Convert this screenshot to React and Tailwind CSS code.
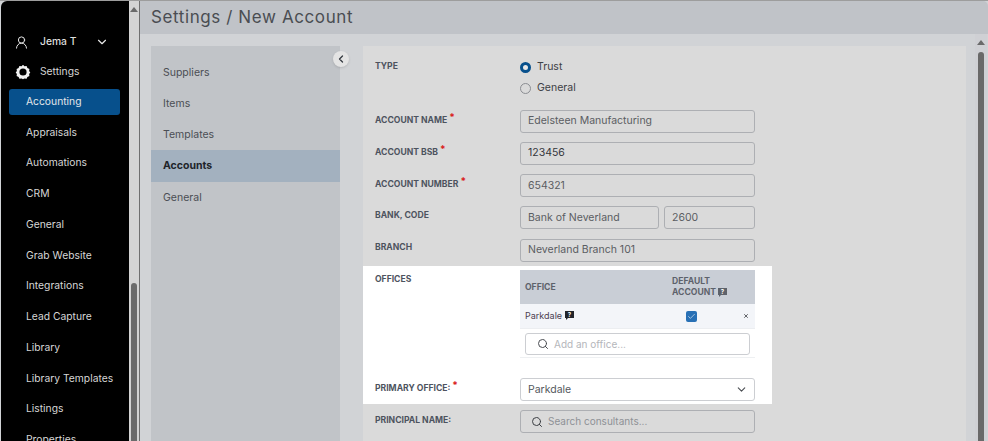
import { ChevronDown, ChevronLeft, Search, UserRound, Check, X } from 'lucide-react';

const navItems = ['Appraisals', 'Automations', 'CRM', 'General', 'Grab Website', 'Integrations', 'Lead Capture', 'Library', 'Library Templates', 'Listings', 'Properties'];
const subItems = ['Suppliers', 'Items', 'Templates', 'Accounts', 'General'];

function ScrollArrow() {
  return <div className="w-0 h-0 border-x-[4px] border-x-transparent border-b-[5px] border-b-[#6a6a6a]" />;
}

function GearIcon() {
  return (
    <svg width="16" height="16" viewBox="0 0 16 16" className="shrink-0">
      <path d="M8 .8l1.4 1.5 2.2-.3.8 2 2 .9-.3 2.2L15.3 8.4l-1.2 1.5.3 2.1-2 .9-.8 1.9-2.2-.2L8 15.2l-1.4-.6-2.2.2-.8-1.9-2-.9.3-2.1L.7 8.4l1.2-1.3-.3-2.2 2-.9.8-2 2.2.3z" fill="#f2f2f2" />
      <circle cx="8" cy="8" r="3.6" fill="#000" />
    </svg>
  );
}

function HelpTag() {
  return (
    <svg width="9" height="9" viewBox="0 0 9 9" className="inline-block shrink-0">
      <path d="M0 0h9v7H3L1 9V7H0z" fill="currentColor" />
      <text x="4.5" y="5.8" textAnchor="middle" fontSize="6" fontWeight="700" fill="#fff">?</text>
    </svg>
  );
}

function Label({ children, required, className = '' }) {
  return (
    <div className={`w-[145px] shrink-0 text-[8.6px] font-bold text-[#4d535e] leading-[12px] ${className}`}>
      {children}
      {required && <span className="text-[#d92020] text-[10px] leading-[0] ml-[2px] relative -top-[2px]">*</span>}
    </div>
  );
}

function Field({ value, className = '', dark }) {
  return (
    <div className={`h-[23px] border border-[#adafb3] rounded-[3px] flex items-center pl-[7px] text-[10.5px] ${dark ? 'text-[#33363b]' : 'text-[#5a5d62]'} ${className}`}>
      {value}
    </div>
  );
}

function FormRow({ label, required, labelClass = 'pt-[4px]', children }) {
  return (
    <div className="flex items-start">
      <Label required={required} className={labelClass}>{label}</Label>
      <div className="w-[235px] flex gap-[5px]">{children}</div>
    </div>
  );
}

export default function App() {
  return (
    <div className="w-[988px] h-[441px] overflow-hidden flex flex-col bg-[#d1d3d6] border-t border-[#9d9d9d] font-['Inter','Liberation_Sans',sans-serif]">
      <div className="flex flex-1 min-h-0">
        {/* left nav */}
        <div className="w-[128px] shrink-0 bg-black rounded-tl-[6px] ml-[1px] pt-[32px] overflow-hidden text-[#d6d6d6] text-[10.3px]">
          <div className="flex items-center h-[18px] pl-[13px] pr-[20px] text-[#dedede] font-medium">
            <UserRound size={15} strokeWidth={1.6} className="text-[#e6e6e6]" />
            <span className="ml-[11px] flex-1">Jema T</span>
            <ChevronDown size={14} strokeWidth={2} className="text-[#e6e6e6]" />
          </div>
          <div className="flex items-center h-[18px] mt-[12px] pl-[14px]">
            <GearIcon />
            <span className="ml-[9px]">Settings</span>
          </div>
          <div className="ml-[8px] mr-[9px] mt-[8px] h-[26px] bg-[#07508c] rounded-[3px] flex items-center pl-[17px] text-[#e2e6ea]">Accounting</div>
          <div className="mt-[2px] flex flex-col">
            {navItems.map(item => (
              <div key={item} className="h-[30.75px] shrink-0 flex items-center pl-[25px]">{item}</div>
            ))}
          </div>
        </div>

        {/* nav scrollbar */}
        <div className="w-[10px] shrink-0 bg-[#d4d4d4] flex flex-col items-center pt-[6px]">
          <ScrollArrow />
          <div className="w-[6px] flex-1 mt-[271px] bg-[#6b6b6b] rounded-t-[3px]" />
        </div>
        <div className="w-[1px] shrink-0 bg-[#6f6f6f]" />

        <div className="flex-1 min-w-0 flex flex-col">
          <div className="h-[33px] shrink-0 bg-[#c0c3c8] rounded-tr-[5px] flex items-center pl-[11px] text-[17px] text-[#4a4d52] tracking-[0.6px]">
            Settings / New Account
          </div>

          <div className="flex-1 min-h-0 flex pl-[11px] pt-[12px] relative">
            {/* settings menu */}
            <div className="w-[189px] shrink-0 bg-[#c1c4c8] pt-[11px] text-[10.5px] text-[#4b4e54]">
              {subItems.map(item => (
                <div key={item} className={`h-[31px] flex items-center pl-[12px] ${item === 'Accounts' ? 'bg-[#a3b1bf] h-[32px] font-bold text-[#20242a]' : ''}`}>{item}</div>
              ))}
            </div>
            <div className="absolute left-[193px] top-[17px] w-[16px] h-[16px] rounded-full bg-[#e4e4e4] shadow-sm flex items-center justify-center">
              <ChevronLeft size={12} strokeWidth={2.5} className="text-[#33383f]" />
            </div>

            {/* form */}
            <div className="w-[603px] ml-[23px] shrink-0 bg-[#dadada] pt-[15px]">
              <div className="flex pl-[12px] text-[10.5px] text-[#3d4045] h-[48.5px]">
                <Label className="-mt-[1px]">TYPE</Label>
                <div className="flex flex-col gap-[9px]">
                  <div className="flex items-center h-[12px]">
                    <span className="w-[11px] h-[11px] rounded-full border-[3.5px] border-[#07508c] bg-[#e8e8e8]" />
                    <span className="ml-[6px]">Trust</span>
                  </div>
                  <div className="flex items-center h-[12px]">
                    <span className="w-[11px] h-[11px] rounded-full border border-[#8b8d92]" />
                    <span className="ml-[6px]">General</span>
                  </div>
                </div>
              </div>

              <div className="flex flex-col gap-[9.25px] pl-[12px]">
                <FormRow label="ACCOUNT NAME" required><Field value="Edelsteen Manufacturing" className="w-full" /></FormRow>
                <FormRow label="ACCOUNT BSB" required><Field value="123456" dark className="w-full" /></FormRow>
                <FormRow label="ACCOUNT NUMBER" required><Field value="654321" className="w-full" /></FormRow>
                <FormRow label="BANK, CODE" labelClass="pt-[3px]">
                  <Field value="Bank of Neverland" className="w-[139px]" />
                  <Field value="2600" className="flex-1 min-w-0" />
                </FormRow>
                <FormRow label="BRANCH" labelClass="pt-[2px]"><Field value="Neverland Branch 101" className="w-full" /></FormRow>
              </div>

              {/* highlighted offices block */}
              <div className="w-[409px] h-[137.5px] mt-[4.5px] bg-white pl-[12px] pt-[4px]">
                <div className="flex items-start">
                  <Label className="pt-[3px]">OFFICES</Label>
                  <div className="w-[235px]">
                    <div className="h-[34px] bg-[#c9ced6] flex items-center pl-[5px] text-[8.6px] font-bold text-[#5d626b] leading-[11px]">
                      <span className="w-[147px]">OFFICE</span>
                      <span>DEFAULT<br />ACCOUNT <HelpTag /></span>
                    </div>
                    <div className="h-[25px] bg-[#f3f5f9] flex items-center pl-[5px] border-b border-[#eceef1] text-[9px] text-[#4c3f52]">
                      <span className="flex items-center gap-[3px] w-[161px]">Parkdale <span className="text-[#22252b] -mt-[2px] flex"><HelpTag /></span></span>
                      <span className="w-[11px] h-[11px] rounded-[2px] bg-[#2870b5] flex items-center justify-center">
                        <Check size={9} strokeWidth={1.5} className="text-white" />
                      </span>
                      <X size={6} strokeWidth={3} className="ml-[46px] text-[#33363b]" />
                    </div>
                    <div className="pt-[4px] px-[5px] pb-[2px] border-b border-[#eef0f2]">
                      <div className="h-[22px] border border-[#ccced2] rounded-[3px] bg-white flex items-center pl-[11px] text-[10px] text-[#b4b6ba]">
                        <Search size={12} strokeWidth={2} className="text-[#4a4d52]" />
                        <span className="ml-[5px]">Add an office...</span>
                      </div>
                    </div>
                  </div>
                </div>
                <div className="flex items-start mt-[20px]">
                  <Label required className="pt-[4px]">PRIMARY OFFICE:</Label>
                  <div className="w-[235px] h-[23px] border border-[#ccced2] rounded-[3px] bg-white flex items-center pl-[7px] pr-[6px] text-[10.5px] text-[#55585d]">
                    <span className="flex-1">Parkdale</span>
                    <ChevronDown size={13} strokeWidth={2} className="text-[#4a4d52]" />
                  </div>
                </div>
              </div>

              <div className="flex items-start pl-[12px] mt-[6.5px]">
                <Label className="pt-[4px]">PRINCIPAL NAME:</Label>
                <div className="w-[235px] h-[23px] border border-[#adafb3] rounded-[3px] flex items-center pl-[10px] text-[10px] text-[#8e9196]">
                  <Search size={12} strokeWidth={2} className="text-[#3d4045]" />
                  <span className="ml-[5px]">Search consultants...</span>
                </div>
              </div>
            </div>

            {/* main scrollbar */}
            <div className="ml-auto mr-[1px] -mt-[12px] w-[12px] flex flex-col items-center bg-[#cfd0d4] pt-[6px]">
              <ScrollArrow />
              <div className="w-[6px] flex-1 mt-[7px] bg-[#696969] rounded-t-[3px]" />
            </div>
          </div>
        </div>
      </div>
    </div>
  );
}
